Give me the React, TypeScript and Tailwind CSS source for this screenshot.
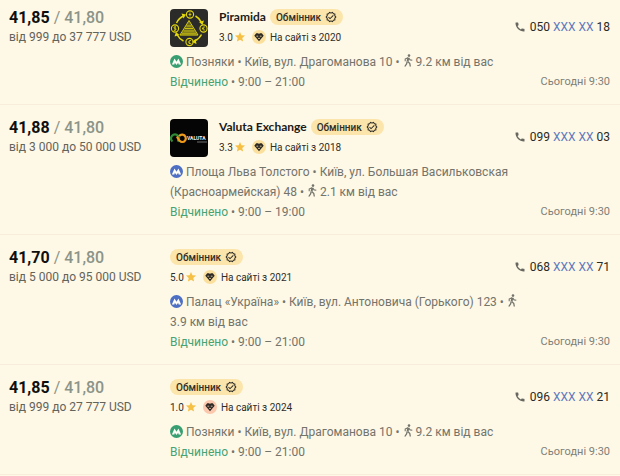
import React from 'react';
import { MdCall, MdOutlineVerified, MdStar } from 'react-icons/md';

type Offer = {
  id: number;
  buy: string;
  sell: string;
  range: string;
  name?: string;
  logo?: 'piramida' | 'valuta';
  rating: string;
  since: number;
  gem: 'gold' | 'rose';
  metro: 'green' | 'blue';
  station: string;
  address: string;
  distance: string;
  hours: string;
  phone: [string, string];
};

const offers: Offer[] = [
  {
    id: 1,
    buy: '41,85',
    sell: '41,80',
    range: 'від 999 до 37 777 USD',
    name: 'Piramida',
    logo: 'piramida',
    rating: '3.0',
    since: 2020,
    gem: 'gold',
    metro: 'green',
    station: 'Позняки',
    address: 'Київ, вул. Драгоманова 10',
    distance: '9.2 км від вас',
    hours: '9:00 – 21:00',
    phone: ['050', '18'],
  },
  {
    id: 2,
    buy: '41,88',
    sell: '41,80',
    range: 'від 3 000 до 50 000 USD',
    name: 'Valuta Exchange',
    logo: 'valuta',
    rating: '3.3',
    since: 2018,
    gem: 'gold',
    metro: 'blue',
    station: 'Площа Льва Толстого',
    address: 'Київ, ул. Большая Васильковская (Красноармейская) 48',
    distance: '2.1 км від вас',
    hours: '9:00 – 19:00',
    phone: ['099', '03'],
  },
  {
    id: 3,
    buy: '41,70',
    sell: '41,80',
    range: 'від 5 000 до 95 000 USD',
    rating: '5.0',
    since: 2021,
    gem: 'gold',
    metro: 'blue',
    station: 'Палац «Україна»',
    address: 'Київ, вул. Антоновича (Горького) 123',
    distance: '3.9 км від вас',
    hours: '9:00 – 21:00',
    phone: ['068', '71'],
  },
  {
    id: 4,
    buy: '41,85',
    sell: '41,80',
    range: 'від 999 до 27 777 USD',
    rating: '1.0',
    since: 2024,
    gem: 'rose',
    metro: 'green',
    station: 'Позняки',
    address: 'Київ, вул. Драгоманова 10',
    distance: '9.2 км від вас',
    hours: '9:00 – 21:00',
    phone: ['096', '21'],
  },
];

const PiramidaLogo: React.FC = () => (
  <svg viewBox="0 0 38 38" className="size-[38px] shrink-0 rounded-sm" aria-hidden="true">
    <rect width="38" height="38" fill="#2b2b29" />
    <g fill="none" stroke="#e3d80c" strokeWidth="1.5">
      <path d="M6.500 14A14 14 0 0 1 13.500 7" />
      <path d="M25.500 7a14 14 0 0 1 6 6.500" />
      <path d="M31.500 25.500a14 14 0 0 1-7 6.500" />
      <path d="M13.500 32A14 14 0 0 1 7 25.500" />
    </g>
    <g fill="#e3d80c">
      <path d="M11.500 4.500l4.500 1-2.500 4z" />
      <path d="M34 11.500l-1.500 4.500-3.500-3z" />
      <path d="M26.500 35l-4.500-2 3.500-3z" />
      <path d="M4.500 27.500l1.500-4.500 3.500 3z" />
      <path d="M19 11.500l9 15H10z" opacity=".35" />
    </g>
    <g fill="none" stroke="#e3d80c" strokeWidth="1.100">
      <circle cx="20" cy="5.500" r="3.600" />
      <circle cx="33.500" cy="19.500" r="3.600" />
      <circle cx="19.500" cy="33" r="3.600" />
      <circle cx="5" cy="19.500" r="3.600" />
      <path d="M19 11.500l9 14.500h-18z" strokeWidth=".9" />
      <path d="M16.500 17h5M15 19.500h8M13.500 22h11M12 24.200h14" strokeWidth=".8" />
      <path d="M20 3.500v4M18.600 5.500h2.800M35 18q-2.500-.5-2.500 1.500t2.500 1.500M32 19.500h2M21 31.500q-2-.5-2 1v2h2.200M18.200 33h2M6 18q-2-.5-2 .6t1.500 1T5.500 21 4 21M5 17v5" strokeWidth=".8" />
    </g>
  </svg>
);

const ValutaLogo: React.FC = () => (
  <svg viewBox="0 0 38 38" className="size-[38px] shrink-0 rounded-sm" aria-hidden="true">
    <rect width="38" height="38" fill="#050505" />
    <path d="M2.500 22.500a4 4 0 1 1 5 0" fill="none" stroke="#2f8b35" strokeWidth="2.200" />
    <path d="M7 17.500q2.500 5.500 5 5.500a3.700 3.700 0 1 0-2.800-6" fill="none" stroke="#f09a1c" strokeWidth="2.200" />
    <text x="17" y="21" fill="#f2f2f2" fontSize="5" fontWeight="700" fontFamily="Roboto, sans-serif">
      VALUTA
    </text>
    <path d="M27 23h10" stroke="#8a8a8a" strokeWidth=".8" />
  </svg>
);

const MetroIcon: React.FC<{ line: Offer['metro'] }> = ({ line }) => (
  <svg viewBox="0 0 14 14" className="mr-[3px] inline-block size-[13px] align-[-2px]" aria-hidden="true">
    <circle cx="7" cy="7" r="7" fill={line === 'green' ? '#379f72' : '#4d6fc4'} />
    <path d="M2 10.300L4.900 3.900 7 7.300l2.100-3.400L12 10.300H9.300L8.800 8.400 7 10.800 5.200 8.400l-.5 1.900z" fill="#fffdf5" />
  </svg>
);

const WalkIcon: React.FC = () => (
  <svg viewBox="0 0 10 13" className="inline-block h-[13px] w-[10px] align-[-1px]" aria-hidden="true">
    <circle cx="6" cy="1.600" r="1.300" fill="currentColor" />
    <g fill="none" stroke="currentColor" strokeLinejoin="round">
      <path d="M5.300 3.600L4.600 7.500" strokeWidth="2" />
      <path d="M5 3.800L2.200 5v2.200M5.800 4.200l1.300 1.700 2.200.3" strokeWidth="1.100" />
      <path d="M4.200 7.500l-.6 2.300L1.800 12.500M4.900 7.600l1.900 1.900.5 3" strokeWidth="1.300" />
    </g>
  </svg>
);

const GemIcon: React.FC<{ tone: Offer['gem'] }> = ({ tone }) => (
  <svg viewBox="0 0 14 14" className="size-[14px] shrink-0" aria-hidden="true">
    <circle cx="7" cy="7" r="7" fill={tone === 'gold' ? '#fbdf9d' : '#fbc7ad'} />
    <path d="M4.200 3.200h1.900L7 4l.9-.8h1.900l1.900 2.500L7 11.200 2.300 5.700z" fill="#2c2924" />
    <path d="M4.400 6.200h1.800M7.800 6.200h1.800M6.200 7.800L7 9l.8-1.200" fill="none" stroke={tone === 'gold' ? '#fbdf9d' : '#fbc7ad'} strokeWidth=".8" />
  </svg>
);

const Badge: React.FC = () => (
  <span className="flex h-4 items-center gap-1 rounded-full bg-[#fce5ab] px-1.5 text-[10px] font-medium text-[#2f2d27]">
    Обмінник
    <MdOutlineVerified className="size-3" />
  </span>
);

const Rating: React.FC<{ offer: Offer }> = ({ offer }) => (
  <div className="flex h-4 items-center text-[10px] text-[#2f2d27]">
    <span>{offer.rating}</span>
    <MdStar className="mr-1.5 ml-px size-3 text-[#f5c043]" />
    <GemIcon tone={offer.gem} />
    <span className="ml-1">На сайті з {offer.since}</span>
  </div>
);

const OfferRow: React.FC<{ offer: Offer }> = ({ offer }) => (
  <li className="flex border-b border-[#f8eddb] pt-[14px] pr-[10px] pb-3 pl-[9px] first:pt-[9px]">
    <div className="w-[161px] shrink-0">
      <p className="text-base/[18px] text-[#8b9489]">
        <span className="font-bold text-[#0f0f0e]">{offer.buy}</span>
        {' / '}
        <span className="font-medium">{offer.sell}</span>
      </p>
      <p className="text-xs/5 text-[#62635b]">{offer.range}</p>
    </div>

    <div className="min-w-0 flex-1">
      <div className="flex h-[38px] gap-[11px]">
        {offer.logo === 'piramida' && <PiramidaLogo />}
        {offer.logo === 'valuta' && <ValutaLogo />}
        <div className="flex flex-col items-start gap-1">
          <div className="flex h-4 items-center gap-1">
            {offer.name && (
              <h2 className="font-[Lato,sans-serif] text-xs font-bold text-[#1b1a17]">{offer.name}</h2>
            )}
            <Badge />
          </div>
          <Rating offer={offer} />
        </div>
      </div>

      {/* The address may run under the phone, which sits higher up */}
      <div className="mt-[5px] -mr-2 text-xs/5 text-[#73746b]">
        <p>
          <MetroIcon line={offer.metro} />
          {offer.station} • {offer.address} • <WalkIcon />{' '}
          <span className="whitespace-nowrap">{offer.distance}</span>
        </p>
        <p>
          <span className="text-[#45a374]">Відчинено</span> • {offer.hours}
        </p>
      </div>
    </div>

    <div className="flex shrink-0 flex-col items-end justify-between pt-2">
      <p className="flex items-center gap-1 text-xs/5 text-[#2a2925]">
        <MdCall className="size-3 text-[#66675f]" />
        <span>
          {offer.phone[0]}{' '}
          <button type="button" className="cursor-pointer text-[#6078bd]">
            XXX XX
          </button>{' '}
          {offer.phone[1]}
        </span>
      </p>
      <p className="text-[11px]/5 text-[#7f8077]">Сьогодні 9:30</p>
    </div>
  </li>
);

export default function App() {
  return (
    <main className="min-h-screen bg-[#fef8e7] font-[Roboto,sans-serif]">
      <ul>
        {offers.map((offer) => (
          <OfferRow key={offer.id} offer={offer} />
        ))}
      </ul>
    </main>
  );
}
